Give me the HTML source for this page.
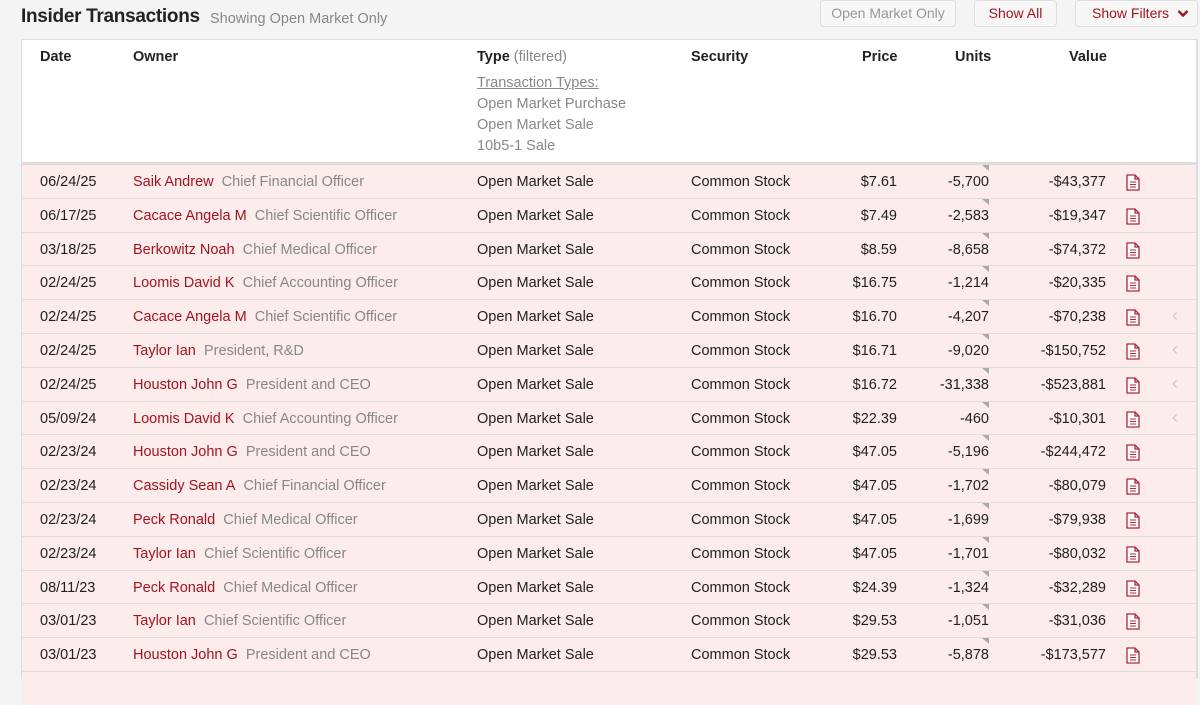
<!DOCTYPE html>
<html><head><style>
*{margin:0;padding:0;box-sizing:border-box}
body{width:1200px;height:675px;overflow:hidden;background:#f4f4f4;font-family:"Liberation Sans",sans-serif;position:relative;color:#222}
.a{position:absolute;white-space:nowrap}
h1{position:absolute;left:21px;top:6px;font-size:19px;font-weight:bold;color:#222;letter-spacing:-0.3px}
.sub{left:210px;top:11px;font-size:14.5px;color:#888}
.btn{position:absolute;top:0;height:27px;border:1px solid #ddd;border-radius:4px;background:#f7f7f7;font-size:14px;line-height:25px;text-align:center}
.tbl{position:absolute;left:21px;top:39px;width:1177px;height:640px;background:#fff;border:1px solid #ddd;border-right:2px solid #ddd}
.th{font-weight:bold;font-size:14.5px;top:49px;color:#222}
.g{color:#888;font-size:14.5px}
.rows{position:absolute;left:22px;top:164px;width:1174px}
.row{position:relative;width:1174px;height:33.8px;background:#fcecec;border-top:1px solid #e6dcdc;font-size:14.5px}
.c{position:absolute;top:9px;white-space:nowrap}
.red{color:#a31420}
.t{color:#888}
.tri{position:absolute;top:0;left:960px;width:0;height:0;border-left:7px solid transparent;border-top:6px solid #aaa}
.ic{position:absolute;left:1104px;top:9px}
.ch{position:absolute;left:1150px;top:5px;color:#ccc;font-size:18px}
</style></head><body>
<h1>Insider Transactions</h1>
<div class="a sub">Showing Open Market Only</div>
<div class="btn" style="left:820px;width:136px;color:#999">Open Market Only</div>
<div class="btn" style="left:974px;width:83px;color:#a31420">Show All</div>
<div class="btn" style="left:1075px;width:123px;color:#a31420;text-align:left;padding-left:16px">Show Filters <svg width="12" height="9" viewBox="0 0 12 9" style="margin-left:4px"><path d="M1.5 2 L6 6.5 L10.5 2" stroke="#a31420" stroke-width="2.4" fill="none"/></svg></div>
<div class="tbl"></div>
<div class="a th" style="left:40px">Date</div>
<div class="a th" style="left:133px">Owner</div>
<div class="a th" style="left:477px">Type <span style="font-weight:normal;color:#888">(filtered)</span></div>
<div class="a th" style="left:691px">Security</div>
<div class="a th" style="left:862px">Price</div>
<div class="a th" style="left:955px">Units</div>
<div class="a th" style="left:1069px">Value</div>
<div class="a g" style="left:477px;top:75px;text-decoration:underline">Transaction Types:</div>
<div class="a g" style="left:477px;top:96px">Open Market Purchase</div>
<div class="a g" style="left:477px;top:117px">Open Market Sale</div>
<div class="a g" style="left:477px;top:138px">10b5-1 Sale</div>
<div class="a" style="left:22px;top:162px;width:1174px;height:2px;background:#ddd"></div>
<div class="rows">
<div class="row"><div class="tri"></div><span class="c" style="left:18px">06/24/25</span><span class="c" style="left:111px"><span class="red">Saik Andrew</span>&nbsp;&nbsp;<span class="t">Chief Financial Officer</span></span><span class="c" style="left:455px">Open Market Sale</span><span class="c" style="left:669px">Common Stock</span><span class="c" style="right:299px">$7.61</span><span class="c" style="right:207px">-5,700</span><span class="c" style="right:90px">-$43,377</span><svg class="ic" width="14" height="17" viewBox="0 0 14 17"><path d="M1 1 H9 L13 5 V16 H1 Z M9 1 V5 H13" stroke="#b0283a" stroke-width="1.3" fill="#fff"/><path d="M4 8 H10 M4 10.5 H10 M4 13 H10" stroke="#b0283a" stroke-width="1.1"/></svg></div>
<div class="row"><div class="tri"></div><span class="c" style="left:18px">06/17/25</span><span class="c" style="left:111px"><span class="red">Cacace Angela M</span>&nbsp;&nbsp;<span class="t">Chief Scientific Officer</span></span><span class="c" style="left:455px">Open Market Sale</span><span class="c" style="left:669px">Common Stock</span><span class="c" style="right:299px">$7.49</span><span class="c" style="right:207px">-2,583</span><span class="c" style="right:90px">-$19,347</span><svg class="ic" width="14" height="17" viewBox="0 0 14 17"><path d="M1 1 H9 L13 5 V16 H1 Z M9 1 V5 H13" stroke="#b0283a" stroke-width="1.3" fill="#fff"/><path d="M4 8 H10 M4 10.5 H10 M4 13 H10" stroke="#b0283a" stroke-width="1.1"/></svg></div>
<div class="row"><div class="tri"></div><span class="c" style="left:18px">03/18/25</span><span class="c" style="left:111px"><span class="red">Berkowitz Noah</span>&nbsp;&nbsp;<span class="t">Chief Medical Officer</span></span><span class="c" style="left:455px">Open Market Sale</span><span class="c" style="left:669px">Common Stock</span><span class="c" style="right:299px">$8.59</span><span class="c" style="right:207px">-8,658</span><span class="c" style="right:90px">-$74,372</span><svg class="ic" width="14" height="17" viewBox="0 0 14 17"><path d="M1 1 H9 L13 5 V16 H1 Z M9 1 V5 H13" stroke="#b0283a" stroke-width="1.3" fill="#fff"/><path d="M4 8 H10 M4 10.5 H10 M4 13 H10" stroke="#b0283a" stroke-width="1.1"/></svg></div>
<div class="row"><div class="tri"></div><span class="c" style="left:18px">02/24/25</span><span class="c" style="left:111px"><span class="red">Loomis David K</span>&nbsp;&nbsp;<span class="t">Chief Accounting Officer</span></span><span class="c" style="left:455px">Open Market Sale</span><span class="c" style="left:669px">Common Stock</span><span class="c" style="right:299px">$16.75</span><span class="c" style="right:207px">-1,214</span><span class="c" style="right:90px">-$20,335</span><svg class="ic" width="14" height="17" viewBox="0 0 14 17"><path d="M1 1 H9 L13 5 V16 H1 Z M9 1 V5 H13" stroke="#b0283a" stroke-width="1.3" fill="#fff"/><path d="M4 8 H10 M4 10.5 H10 M4 13 H10" stroke="#b0283a" stroke-width="1.1"/></svg></div>
<div class="row"><div class="tri"></div><span class="c" style="left:18px">02/24/25</span><span class="c" style="left:111px"><span class="red">Cacace Angela M</span>&nbsp;&nbsp;<span class="t">Chief Scientific Officer</span></span><span class="c" style="left:455px">Open Market Sale</span><span class="c" style="left:669px">Common Stock</span><span class="c" style="right:299px">$16.70</span><span class="c" style="right:207px">-4,207</span><span class="c" style="right:90px">-$70,238</span><svg class="ic" width="14" height="17" viewBox="0 0 14 17"><path d="M1 1 H9 L13 5 V16 H1 Z M9 1 V5 H13" stroke="#b0283a" stroke-width="1.3" fill="#fff"/><path d="M4 8 H10 M4 10.5 H10 M4 13 H10" stroke="#b0283a" stroke-width="1.1"/></svg><span class="ch">&#8249;</span></div>
<div class="row"><div class="tri"></div><span class="c" style="left:18px">02/24/25</span><span class="c" style="left:111px"><span class="red">Taylor Ian</span>&nbsp;&nbsp;<span class="t">President, R&amp;D</span></span><span class="c" style="left:455px">Open Market Sale</span><span class="c" style="left:669px">Common Stock</span><span class="c" style="right:299px">$16.71</span><span class="c" style="right:207px">-9,020</span><span class="c" style="right:90px">-$150,752</span><svg class="ic" width="14" height="17" viewBox="0 0 14 17"><path d="M1 1 H9 L13 5 V16 H1 Z M9 1 V5 H13" stroke="#b0283a" stroke-width="1.3" fill="#fff"/><path d="M4 8 H10 M4 10.5 H10 M4 13 H10" stroke="#b0283a" stroke-width="1.1"/></svg><span class="ch">&#8249;</span></div>
<div class="row"><div class="tri"></div><span class="c" style="left:18px">02/24/25</span><span class="c" style="left:111px"><span class="red">Houston John G</span>&nbsp;&nbsp;<span class="t">President and CEO</span></span><span class="c" style="left:455px">Open Market Sale</span><span class="c" style="left:669px">Common Stock</span><span class="c" style="right:299px">$16.72</span><span class="c" style="right:207px">-31,338</span><span class="c" style="right:90px">-$523,881</span><svg class="ic" width="14" height="17" viewBox="0 0 14 17"><path d="M1 1 H9 L13 5 V16 H1 Z M9 1 V5 H13" stroke="#b0283a" stroke-width="1.3" fill="#fff"/><path d="M4 8 H10 M4 10.5 H10 M4 13 H10" stroke="#b0283a" stroke-width="1.1"/></svg><span class="ch">&#8249;</span></div>
<div class="row"><div class="tri"></div><span class="c" style="left:18px">05/09/24</span><span class="c" style="left:111px"><span class="red">Loomis David K</span>&nbsp;&nbsp;<span class="t">Chief Accounting Officer</span></span><span class="c" style="left:455px">Open Market Sale</span><span class="c" style="left:669px">Common Stock</span><span class="c" style="right:299px">$22.39</span><span class="c" style="right:207px">-460</span><span class="c" style="right:90px">-$10,301</span><svg class="ic" width="14" height="17" viewBox="0 0 14 17"><path d="M1 1 H9 L13 5 V16 H1 Z M9 1 V5 H13" stroke="#b0283a" stroke-width="1.3" fill="#fff"/><path d="M4 8 H10 M4 10.5 H10 M4 13 H10" stroke="#b0283a" stroke-width="1.1"/></svg><span class="ch">&#8249;</span></div>
<div class="row"><div class="tri"></div><span class="c" style="left:18px">02/23/24</span><span class="c" style="left:111px"><span class="red">Houston John G</span>&nbsp;&nbsp;<span class="t">President and CEO</span></span><span class="c" style="left:455px">Open Market Sale</span><span class="c" style="left:669px">Common Stock</span><span class="c" style="right:299px">$47.05</span><span class="c" style="right:207px">-5,196</span><span class="c" style="right:90px">-$244,472</span><svg class="ic" width="14" height="17" viewBox="0 0 14 17"><path d="M1 1 H9 L13 5 V16 H1 Z M9 1 V5 H13" stroke="#b0283a" stroke-width="1.3" fill="#fff"/><path d="M4 8 H10 M4 10.5 H10 M4 13 H10" stroke="#b0283a" stroke-width="1.1"/></svg></div>
<div class="row"><div class="tri"></div><span class="c" style="left:18px">02/23/24</span><span class="c" style="left:111px"><span class="red">Cassidy Sean A</span>&nbsp;&nbsp;<span class="t">Chief Financial Officer</span></span><span class="c" style="left:455px">Open Market Sale</span><span class="c" style="left:669px">Common Stock</span><span class="c" style="right:299px">$47.05</span><span class="c" style="right:207px">-1,702</span><span class="c" style="right:90px">-$80,079</span><svg class="ic" width="14" height="17" viewBox="0 0 14 17"><path d="M1 1 H9 L13 5 V16 H1 Z M9 1 V5 H13" stroke="#b0283a" stroke-width="1.3" fill="#fff"/><path d="M4 8 H10 M4 10.5 H10 M4 13 H10" stroke="#b0283a" stroke-width="1.1"/></svg></div>
<div class="row"><div class="tri"></div><span class="c" style="left:18px">02/23/24</span><span class="c" style="left:111px"><span class="red">Peck Ronald</span>&nbsp;&nbsp;<span class="t">Chief Medical Officer</span></span><span class="c" style="left:455px">Open Market Sale</span><span class="c" style="left:669px">Common Stock</span><span class="c" style="right:299px">$47.05</span><span class="c" style="right:207px">-1,699</span><span class="c" style="right:90px">-$79,938</span><svg class="ic" width="14" height="17" viewBox="0 0 14 17"><path d="M1 1 H9 L13 5 V16 H1 Z M9 1 V5 H13" stroke="#b0283a" stroke-width="1.3" fill="#fff"/><path d="M4 8 H10 M4 10.5 H10 M4 13 H10" stroke="#b0283a" stroke-width="1.1"/></svg></div>
<div class="row"><div class="tri"></div><span class="c" style="left:18px">02/23/24</span><span class="c" style="left:111px"><span class="red">Taylor Ian</span>&nbsp;&nbsp;<span class="t">Chief Scientific Officer</span></span><span class="c" style="left:455px">Open Market Sale</span><span class="c" style="left:669px">Common Stock</span><span class="c" style="right:299px">$47.05</span><span class="c" style="right:207px">-1,701</span><span class="c" style="right:90px">-$80,032</span><svg class="ic" width="14" height="17" viewBox="0 0 14 17"><path d="M1 1 H9 L13 5 V16 H1 Z M9 1 V5 H13" stroke="#b0283a" stroke-width="1.3" fill="#fff"/><path d="M4 8 H10 M4 10.5 H10 M4 13 H10" stroke="#b0283a" stroke-width="1.1"/></svg></div>
<div class="row"><div class="tri"></div><span class="c" style="left:18px">08/11/23</span><span class="c" style="left:111px"><span class="red">Peck Ronald</span>&nbsp;&nbsp;<span class="t">Chief Medical Officer</span></span><span class="c" style="left:455px">Open Market Sale</span><span class="c" style="left:669px">Common Stock</span><span class="c" style="right:299px">$24.39</span><span class="c" style="right:207px">-1,324</span><span class="c" style="right:90px">-$32,289</span><svg class="ic" width="14" height="17" viewBox="0 0 14 17"><path d="M1 1 H9 L13 5 V16 H1 Z M9 1 V5 H13" stroke="#b0283a" stroke-width="1.3" fill="#fff"/><path d="M4 8 H10 M4 10.5 H10 M4 13 H10" stroke="#b0283a" stroke-width="1.1"/></svg></div>
<div class="row"><div class="tri"></div><span class="c" style="left:18px">03/01/23</span><span class="c" style="left:111px"><span class="red">Taylor Ian</span>&nbsp;&nbsp;<span class="t">Chief Scientific Officer</span></span><span class="c" style="left:455px">Open Market Sale</span><span class="c" style="left:669px">Common Stock</span><span class="c" style="right:299px">$29.53</span><span class="c" style="right:207px">-1,051</span><span class="c" style="right:90px">-$31,036</span><svg class="ic" width="14" height="17" viewBox="0 0 14 17"><path d="M1 1 H9 L13 5 V16 H1 Z M9 1 V5 H13" stroke="#b0283a" stroke-width="1.3" fill="#fff"/><path d="M4 8 H10 M4 10.5 H10 M4 13 H10" stroke="#b0283a" stroke-width="1.1"/></svg></div>
<div class="row"><div class="tri"></div><span class="c" style="left:18px">03/01/23</span><span class="c" style="left:111px"><span class="red">Houston John G</span>&nbsp;&nbsp;<span class="t">President and CEO</span></span><span class="c" style="left:455px">Open Market Sale</span><span class="c" style="left:669px">Common Stock</span><span class="c" style="right:299px">$29.53</span><span class="c" style="right:207px">-5,878</span><span class="c" style="right:90px">-$173,577</span><svg class="ic" width="14" height="17" viewBox="0 0 14 17"><path d="M1 1 H9 L13 5 V16 H1 Z M9 1 V5 H13" stroke="#b0283a" stroke-width="1.3" fill="#fff"/><path d="M4 8 H10 M4 10.5 H10 M4 13 H10" stroke="#b0283a" stroke-width="1.1"/></svg></div>
<div class="row"></div>
</div>
</body></html>
